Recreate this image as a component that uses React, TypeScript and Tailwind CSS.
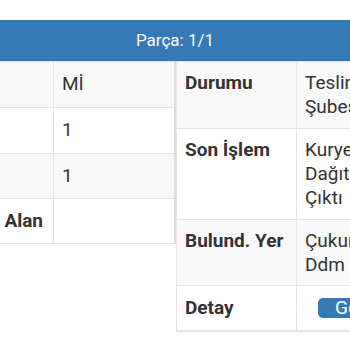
const leftRows = [
  { label: "", value: "Mİ", h: "h-[46px]", striped: true },
  { label: "", value: "1", h: "h-[46px]", striped: false },
  { label: "", value: "1", h: "h-[45px]", striped: true },
  { label: "Alan", value: "", h: "h-[45px]", striped: false },
];

const rightRows = [
  { label: "Durumu", lines: ["Teslim Edildi", "Şubesi"], h: "h-[67px]", striped: true },
  { label: "Son İşlem", lines: ["Kurye", "Dağıtıma", "Çıktı"], h: "h-[91px]", striped: false },
  { label: "Bulund. Yer", lines: ["Çukurova", "Ddm"], h: "h-[66px]", striped: true },
];

export default function App() {
  return (
    <div className="w-[350px] h-[350px] overflow-hidden bg-white text-[#333] font-['Roboto',sans-serif]">
      <div className="h-5" />
      <div className="h-[41px] bg-[#337ab7] flex items-center justify-center text-white text-[17px]">
        Parça: 1/1
      </div>
      <div className="flex items-start">
        <div className="w-[176px] shrink-0 border-t border-[#e4e4e4] border-r-2 border-r-[#dcdcdc]">
          {leftRows.map((r, i) => (
            <div
              key={i}
              className={`flex ${r.h} border-b border-[#e4e4e4] ${r.striped ? "bg-[#f9f9f9]" : "bg-white"}`}
            >
              <div className="w-[54px] shrink-0 border-r border-[#e4e4e4] flex justify-end pr-[10px] pt-[10px] text-[19px] leading-6 font-bold">
                {r.label}
              </div>
              <div className="flex-1 pl-2 pt-[10px] text-[19px] leading-6">{r.value}</div>
            </div>
          ))}
        </div>
        <div className="flex-1 min-w-0 border-t border-[#e4e4e4] border-l border-l-[#e4e4e4] overflow-hidden">
          {rightRows.map((r, i) => (
            <div
              key={i}
              className={`flex ${r.h} border-b border-[#e4e4e4] ${r.striped ? "bg-[#f9f9f9]" : "bg-white"}`}
            >
              <div className="w-[120px] shrink-0 border-r border-[#e4e4e4] pl-2 pt-[9px] text-[19px] leading-6 font-bold">
                {r.label}
              </div>
              <div className="pl-2 pt-[9px] text-[19px] leading-6 whitespace-nowrap">
                {r.lines.map((l) => (
                  <div key={l}>{l}</div>
                ))}
              </div>
            </div>
          ))}
          <div className="flex h-[46px] border-b-2 border-[#e4e4e4] bg-white">
            <div className="w-[120px] shrink-0 border-r border-[#e4e4e4] pl-2 flex items-center text-[19px] font-bold">
              Detay
            </div>
            <div className="pl-[21px] flex items-center">
              <button className="h-[20px] px-[17px] rounded-[5px] bg-[#337ab7] text-white text-[19px] leading-5 whitespace-nowrap">
                Göster
              </button>
            </div>
          </div>
        </div>
      </div>
    </div>
  );
}
